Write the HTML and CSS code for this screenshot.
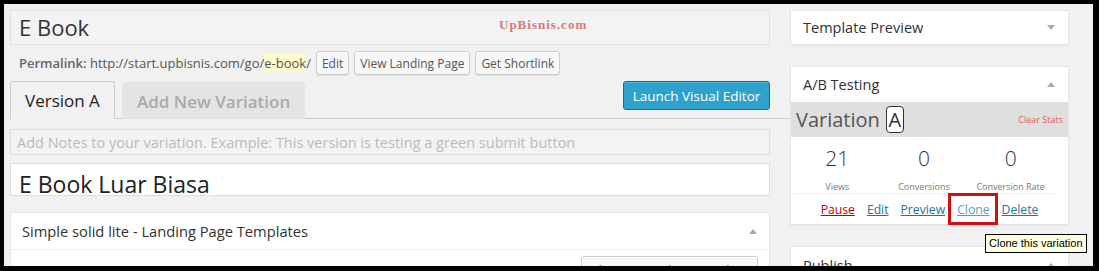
FILE: index.html
```html
<!DOCTYPE html>
<html lang="en">
<head>
    <meta charset="UTF-8">
    <title>E Book - Landing Page</title>
    <link rel="stylesheet" href="styles.css">
</head>
<body>
    <div class="screen">
        <div class="main">
            <div class="title-field">
                E Book
                <span class="watermark">UpBisnis.com</span>
            </div>

            <div class="permalink">
                <span class="permalink-text"><strong>Permalink:</strong> http://start.upbisnis.com/go/<span class="slug">e-book</span>/</span>
                <button class="btn">Edit</button>
                <button class="btn">View Landing Page</button>
                <button class="btn">Get Shortlink</button>
            </div>

            <div class="tabs">
                <div class="tab active">Version A</div>
                <div class="tab">Add New Variation</div>
                <button class="launch">Launch Visual Editor</button>
            </div>

            <div class="notes">Add Notes to your variation. Example: This version is testing a green submit button</div>

            <div class="title-field variation-title">E Book Luar Biasa</div>

            <div class="postbox">
                <div class="postbox-head">
                    <h3>Simple solid lite - Landing Page Templates</h3>
                    <span class="arrow up"></span>
                </div>
                <div class="postbox-body">
                    <button class="btn choose">Choose Another Template</button>
                </div>
            </div>
        </div>

        <div class="side">
            <div class="box">
                <div class="box-head">
                    <h3>Template Preview</h3>
                    <span class="arrow down"></span>
                </div>
            </div>

            <div class="box ab-box">
                <div class="box-head">
                    <h3>A/B Testing</h3>
                    <span class="arrow up"></span>
                </div>
                <div class="variation-head">
                    <span class="variation-label">Variation</span>
                    <span class="variation-letter">A</span>
                    <a class="clear-stats">Clear Stats</a>
                </div>
                <div class="stats">
                    <div class="stat">
                        <div class="stat-num">21</div>
                        <div class="stat-label">Views</div>
                    </div>
                    <div class="stat">
                        <div class="stat-num">0</div>
                        <div class="stat-label">Conversions</div>
                    </div>
                    <div class="stat">
                        <div class="stat-num">0</div>
                        <div class="stat-label">Conversion Rate</div>
                    </div>
                </div>
                <div class="actions">
                    <a class="pause">Pause</a>
                    <a>Edit</a>
                    <a>Preview</a>
                    <a class="clone">Clone</a>
                    <a>Delete</a>
                </div>
            </div>

            <div class="box publish-box">
                <div class="box-head">
                    <h3>Publish</h3>
                    <span class="arrow up"></span>
                </div>
            </div>
        </div>

        <!-- screenshot annotations -->
        <div class="highlight"></div>
        <div class="tooltip">Clone this variation</div>
    </div>
</body>
</html>
```

FILE: styles.css
```css
body {
    margin: 0;
    background-color: #000; /* black frame around the capture */
    font-family: 'Open Sans', 'Liberation Sans', sans-serif;
    color: #444;
}

.screen {
    position: relative;
    display: flex;
    gap: 20px;
    width: 1089px;
    height: 262px;
    margin: 4px 0 0 4px;
    padding: 6px 0 0 6px;
    box-sizing: border-box;
    overflow: hidden;
    background-color: #f1f1f1;
}

button {
    font-family: inherit;
    cursor: pointer;
}

h3 {
    margin: 0;
    font-weight: 400;
}

/* ---- left column ---- */

.main {
    width: 760px;
    flex-shrink: 0;
}

.title-field {
    position: relative;
    height: 35px;
    box-sizing: border-box;
    padding-left: 8px;
    border: 1px solid #e0e0e0;
    background-color: #f3f3f3;
    font-size: 22px;
    line-height: 33px;
    color: #333;
}

.watermark {
    position: absolute;
    left: 488px;
    top: 0;
    font-family: 'Liberation Serif', serif;
    font-size: 13px;
    font-weight: bold;
    letter-spacing: 1px;
    color: #d27b7b;
    line-height: 27px;
}

.permalink {
    display: flex;
    align-items: center;
    gap: 5px;
    margin-top: 6px;
    padding-left: 9px;
    height: 24px;
    font-size: 13px;
    color: #555;
}

.permalink-text strong {
    font-weight: 600;
    color: #666;
}

.slug {
    background-color: #fffbcc;
}

.btn {
    height: 24px;
    padding: 0 5px;
    border: 1px solid #ccc;
    border-radius: 3px;
    background-color: #f7f7f7;
    box-shadow: inset 0 1px 0 #fff, 0 1px 0 rgba(0, 0, 0, 0.08);
    font-size: 12px;
    color: #555;
}

.tabs {
    display: flex;
    align-items: flex-end;
    height: 38px;
    margin-top: 5px;
    margin-right: -22px;
    border-bottom: 1px solid #ccc;
}

.tab {
    height: 37px;
    box-sizing: border-box;
    padding: 0 14px;
    margin-bottom: -1px;
    border: 1px solid #e4e4e4;
    border-bottom: none;
    border-radius: 3px 3px 0 0;
    background-color: #e4e4e4;
    font-size: 17px;
    font-weight: 600;
    line-height: 37px;
    color: #aaa;
}

.tab + .tab {
    margin-left: 7px;
}

.tab.active {
    height: 38px;
    width: 105px;
    border-color: #ccc;
    background-color: #f1f1f1;
    font-weight: 400;
    color: #222;
}

.launch {
    align-self: flex-start;
    margin: 1px 22px 0 auto;
    height: 29px;
    width: 147px;
    padding: 0;
    border: 1px solid #0074a2;
    border-radius: 3px;
    background-color: #2ea2cc;
    box-shadow: inset 0 1px 0 rgba(120, 200, 230, 0.5);
    font-size: 13.5px;
    color: #fff;
}

.notes {
    height: 26px;
    box-sizing: border-box;
    margin-top: 10px;
    padding-left: 6px;
    border: 1px solid #ddd;
    background-color: #f3f3f3;
    font-size: 14.5px;
    line-height: 26px;
    color: #bbb;
    white-space: nowrap;
    overflow: hidden;
}

.variation-title {
    height: 33px;
    margin-top: 8px;
    padding-top: 9px;
    border-color: #ddd;
    background-color: #fff;
    font-size: 23px;
    line-height: 22px;
    color: #222;
}

.postbox {
    margin-top: 16px;
    border: 1px solid #e5e5e5;
    background-color: #fff;
}

.postbox-head {
    display: flex;
    align-items: center;
    justify-content: space-between;
    height: 36px;
    padding: 0 12px 0 11px;
    border-bottom: 1px solid #eee;
}

.postbox-head h3 {
    font-size: 14.7px;
    color: #333;
}

.postbox-body {
    display: flex;
    justify-content: flex-end;
    padding: 6px 11px 0;
}

.choose {
    width: 177px;
    height: 28px;
    font-size: 13px;
}

/* ---- right column ---- */

.side {
    width: 279px;
    flex-shrink: 0;
}

.box {
    border: 1px solid #e5e5e5;
    background-color: #fff;
    box-shadow: 0 1px 1px rgba(0, 0, 0, 0.04);
}

.box + .box {
    margin-top: 21px;
}

.box-head {
    display: flex;
    align-items: center;
    justify-content: space-between;
    height: 33px;
    padding: 0 13px 0 12px;
}

.box-head h3 {
    font-size: 14.5px;
    color: #333;
}

.ab-box .box-head {
    height: 35px;
}

.arrow {
    width: 0;
    height: 0;
    border-left: 4px solid transparent;
    border-right: 4px solid transparent;
}

.arrow.down {
    border-top: 5px solid #aaa;
}

.arrow.up {
    border-bottom: 5px solid #aaa;
}

.variation-head {
    display: flex;
    align-items: center;
    height: 35px;
    padding: 0 5px;
    background-color: #dfdfdf;
}

.variation-label {
    font-size: 20px;
    color: #555;
    line-height: 1;
}

.variation-letter {
    margin-left: 6px;
    width: 18px;
    height: 27px;
    box-sizing: border-box;
    border: 1px solid #333;
    border-radius: 4px;
    background-color: #fff;
    font-size: 20px;
    line-height: 25px;
    text-align: center;
    color: #333;
}

.clear-stats {
    margin-left: auto;
    font-size: 9px;
    color: #e35b5b;
}

.stats {
    display: grid;
    grid-template-columns: repeat(3, 1fr);
    height: 56px;
    margin: 0 14px 0 3px;
    border-bottom: 1px solid #eee;
    text-align: center;
}

.stat-num {
    padding-top: 7px;
    font-size: 21px;
    font-weight: 300;
    line-height: 28px;
    color: #333;
}

.stat-label {
    margin-top: 8px;
    font-size: 9px;
    color: #777;
}

.actions {
    display: flex;
    justify-content: center;
    align-items: center;
    gap: 12px;
    height: 30px;
    padding-top: 1px;
    box-sizing: border-box;
    font-size: 12.2px;
}

.actions a {
    color: #21759b;
    text-decoration: underline;
}

.actions .pause {
    color: #b00;
}

.actions .clone {
    color: #5c9fc0;
}

.publish-box .box-head {
    height: 36px;
}

/* ---- annotations drawn over the capture ---- */

.highlight {
    position: absolute;
    left: 944px;
    top: 189px;
    width: 50px;
    height: 32px;
    box-sizing: border-box;
    border: 3px solid #d01010;
}

.tooltip {
    position: absolute;
    left: 981px;
    top: 230px;
    height: 19px;
    box-sizing: border-box;
    padding: 0 3px;
    border: 1px solid #000;
    background-color: #ffffe1;
    font-family: 'Liberation Sans', sans-serif;
    font-size: 11px;
    line-height: 17px;
    color: #000;
    white-space: nowrap;
}
```
